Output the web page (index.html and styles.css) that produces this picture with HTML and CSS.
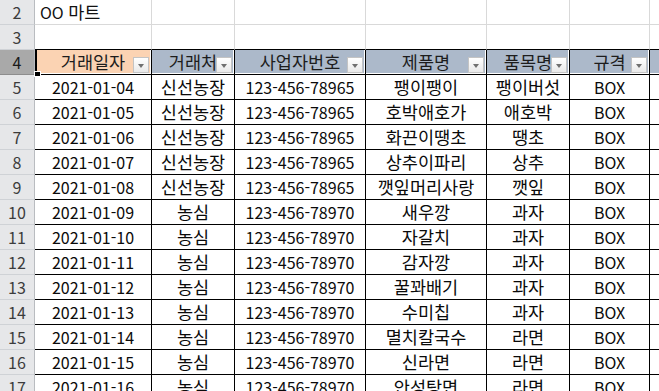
FILE: index.html
```html
<!DOCTYPE html>
<html lang="ko">
<head>
<meta charset="utf-8">
<link rel="stylesheet" href="styles.css">
</head>
<body>
<div class="sheet">
  <div class="row plain">
    <div class="rh">2</div><div class="c left">OO&nbsp;<span class="k">마트</span></div><div class="c"></div><div class="c"></div><div class="c"></div><div class="c"></div><div class="c"></div><div class="c"></div>
  </div>
  <div class="row plain last">
    <div class="rh">3</div><div class="c"></div><div class="c"></div><div class="c"></div><div class="c"></div><div class="c"></div><div class="c"></div><div class="c"></div>
  </div>
  <div class="row head">
    <div class="rh sel">4</div>
    <div class="h peach active k">거래일자<span class="dd"></span><span class="handle"></span></div>
    <div class="h k">거래처<span class="dd"></span></div>
    <div class="h k">사업자번호<span class="dd"></span></div>
    <div class="h k">제품명<span class="dd"></span></div>
    <div class="h k">품목명<span class="dd"></span></div>
    <div class="h k">규격<span class="dd"></span></div>
    <div class="h"></div>
  </div>
  <div class="row data"><div class="rh">5</div><div class="d">2021-01-04</div><div class="d k">신선농장</div><div class="d">123-456-78965</div><div class="d k">팽이팽이</div><div class="d k">팽이버섯</div><div class="d">BOX</div><div class="d"></div></div>
  <div class="row data"><div class="rh">6</div><div class="d">2021-01-05</div><div class="d k">신선농장</div><div class="d">123-456-78965</div><div class="d k">호박애호가</div><div class="d k">애호박</div><div class="d">BOX</div><div class="d"></div></div>
  <div class="row data"><div class="rh">7</div><div class="d">2021-01-06</div><div class="d k">신선농장</div><div class="d">123-456-78965</div><div class="d k">화끈이땡초</div><div class="d k">땡초</div><div class="d">BOX</div><div class="d"></div></div>
  <div class="row data"><div class="rh">8</div><div class="d">2021-01-07</div><div class="d k">신선농장</div><div class="d">123-456-78965</div><div class="d k">상추이파리</div><div class="d k">상추</div><div class="d">BOX</div><div class="d"></div></div>
  <div class="row data"><div class="rh">9</div><div class="d">2021-01-08</div><div class="d k">신선농장</div><div class="d">123-456-78965</div><div class="d k">깻잎머리사랑</div><div class="d k">깻잎</div><div class="d">BOX</div><div class="d"></div></div>
  <div class="row data"><div class="rh">10</div><div class="d">2021-01-09</div><div class="d k">농심</div><div class="d">123-456-78970</div><div class="d k">새우깡</div><div class="d k">과자</div><div class="d">BOX</div><div class="d"></div></div>
  <div class="row data"><div class="rh">11</div><div class="d">2021-01-10</div><div class="d k">농심</div><div class="d">123-456-78970</div><div class="d k">자갈치</div><div class="d k">과자</div><div class="d">BOX</div><div class="d"></div></div>
  <div class="row data"><div class="rh">12</div><div class="d">2021-01-11</div><div class="d k">농심</div><div class="d">123-456-78970</div><div class="d k">감자깡</div><div class="d k">과자</div><div class="d">BOX</div><div class="d"></div></div>
  <div class="row data"><div class="rh">13</div><div class="d">2021-01-12</div><div class="d k">농심</div><div class="d">123-456-78970</div><div class="d k">꿀꽈배기</div><div class="d k">과자</div><div class="d">BOX</div><div class="d"></div></div>
  <div class="row data"><div class="rh">14</div><div class="d">2021-01-13</div><div class="d k">농심</div><div class="d">123-456-78970</div><div class="d k">수미칩</div><div class="d k">과자</div><div class="d">BOX</div><div class="d"></div></div>
  <div class="row data"><div class="rh">15</div><div class="d">2021-01-14</div><div class="d k">농심</div><div class="d">123-456-78970</div><div class="d k">멸치칼국수</div><div class="d k">라면</div><div class="d">BOX</div><div class="d"></div></div>
  <div class="row data"><div class="rh">16</div><div class="d">2021-01-15</div><div class="d k">농심</div><div class="d">123-456-78970</div><div class="d k">신라면</div><div class="d k">라면</div><div class="d">BOX</div><div class="d"></div></div>
  <div class="row data"><div class="rh">17</div><div class="d">2021-01-16</div><div class="d k">농심</div><div class="d">123-456-78970</div><div class="d k">안성탕면</div><div class="d k">라면</div><div class="d">BOX</div><div class="d"></div></div>
</div>
</body>
</html>
```
FILE: styles.css
```css
html, body {
  margin: 0;
  padding: 0;
  background: #ffffff;
  overflow: hidden;
}
body {
  font-family: "Noto Sans CJK KR", "Noto Sans", sans-serif;
  font-size: 16px;
  color: #111;
}
.sheet {
  width: 659px;
  height: 391px;
  overflow: hidden;
}
.row {
  display: grid;
  grid-template-columns: 35px 117px 83px 131px 121px 83px 80px 40px;
  height: 25px;
}
.row > div {
  box-sizing: border-box;
  height: 25px;
  display: flex;
  align-items: center;
  justify-content: center;
  line-height: 1;
  white-space: nowrap;
  position: relative;
}
.k {
  font-size: 17.5px;
}
.rh {
  background: #e6e7e9;
  color: #3c3c3c;
  border-right: 1px solid #b9bcc0;
  border-bottom: 1px solid #cfd2d6;
}
.rh.sel {
  background: #a9a9a9;
  color: #1a1a1a;
  border-bottom-color: #8d8d8d;
}
.c {
  border-right: 1px solid #d9d9d9;
  border-bottom: 1px solid #d9d9d9;
}
.c.left {
  justify-content: flex-start;
  padding-left: 5px;
}
.last .c {
  border-bottom: 1px solid #000;
}
.h {
  background: #acb9ca;
  color: #1d1d1d;
  border-right: 1px solid #000;
  border-bottom: 1px solid #000;
  box-shadow: inset -1px 0 0 #ffffff, inset 0 -1px 0 #ffffff;
}
.h.peach {
  background: #fbd3b3;
}
.h.active {
  box-shadow: inset 2px 0 0 #000, inset -1px 0 0 #ffffff, inset 0 -1px 0 #ffffff;
}
.dd {
  position: absolute;
  right: 2px;
  bottom: 1px;
  width: 16px;
  height: 16px;
  box-sizing: border-box;
  border: 1px solid #c4c4c4;
  background: linear-gradient(#ffffff, #e9e9e9);
}
.dd::after {
  content: "";
  position: absolute;
  left: 4px;
  top: 6px;
  border-left: 3.5px solid transparent;
  border-right: 3.5px solid transparent;
  border-top: 4px solid #707070;
}
.handle {
  position: absolute;
  left: 0;
  bottom: -2px;
  width: 5px;
  height: 4px;
  background: #000;
  box-shadow: 0 0 0 1px #ffffff;
  z-index: 2;
}
.d {
  border-right: 1px solid #000;
  border-bottom: 1px solid #000;
  color: #0a0a0a;
}
```
